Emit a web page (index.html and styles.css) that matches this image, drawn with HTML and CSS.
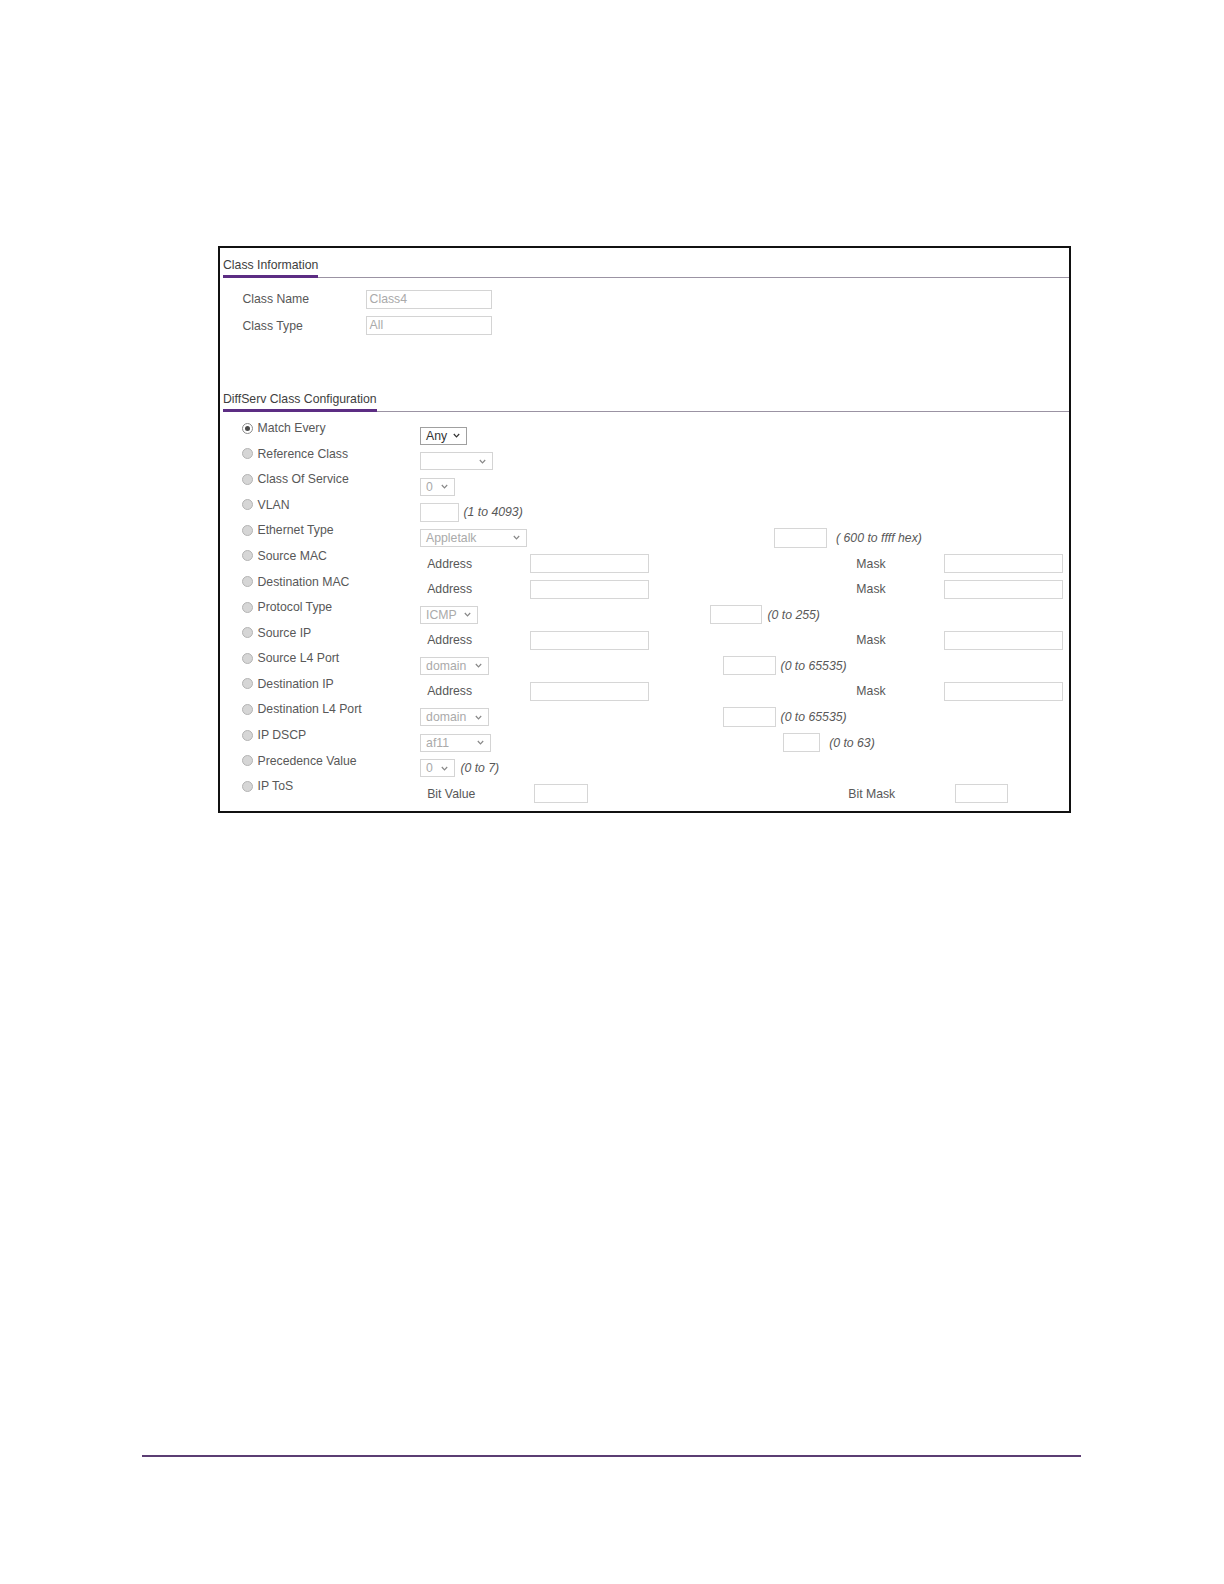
FILE: index.html
```html
<!DOCTYPE html>
<html>
<head>
<meta charset="utf-8">
<title>DiffServ Class Configuration</title>
<link rel="stylesheet" href="styles.css">
</head>
<body>
<div class="page">
  <div class="panel">
    <div class="section-head head-info"><span>Class Information</span></div>
    <div class="info">
      <div class="info-row"><div class="info-label">Class Name</div><div class="tbox">Class4</div></div>
      <div class="info-row"><div class="info-label">Class Type</div><div class="tbox">All</div></div>
    </div>
    <div class="section-head head-diff"><span>DiffServ Class Configuration</span></div>
    <div class="rows">
      <div class="row">
        <div class="opt"><span class="radio on"></span>Match Every</div>
        <div class="ctl"><div class="sel sel-active w46"><span>Any</span><svg viewBox="0 0 7 5"><path d="M0.8 1 L3.5 3.8 L6.2 1"/></svg></div></div>
      </div>
      <div class="row">
        <div class="opt"><span class="radio"></span>Reference Class</div>
        <div class="ctl"><div class="sel w72"><span></span><svg viewBox="0 0 7 5"><path d="M0.8 1 L3.5 3.8 L6.2 1"/></svg></div></div>
      </div>
      <div class="row">
        <div class="opt"><span class="radio"></span>Class Of Service</div>
        <div class="ctl"><div class="sel w35"><span>0</span><svg viewBox="0 0 7 5"><path d="M0.8 1 L3.5 3.8 L6.2 1"/></svg></div></div>
      </div>
      <div class="row">
        <div class="opt"><span class="radio"></span>VLAN</div>
        <div class="ctl"><div class="fld w39"></div><span class="hint g4">(1 to 4093)</span></div>
      </div>
      <div class="row">
        <div class="opt"><span class="radio"></span>Ethernet Type</div>
        <div class="ctl"><div class="sel w106"><span>Appletalk</span><svg viewBox="0 0 7 5"><path d="M0.8 1 L3.5 3.8 L6.2 1"/></svg></div><div class="fld w52 ml245"></div><span class="hint g9">( 600 to ffff hex)</span></div>
      </div>
      <div class="row">
        <div class="opt"><span class="radio"></span>Source MAC</div>
        <div class="ctl"><div class="sub">Address</div><div class="fld w118"></div><div class="mask">Mask</div><div class="fld w118"></div></div>
      </div>
      <div class="row">
        <div class="opt"><span class="radio"></span>Destination MAC</div>
        <div class="ctl"><div class="sub">Address</div><div class="fld w118"></div><div class="mask">Mask</div><div class="fld w118"></div></div>
      </div>
      <div class="row">
        <div class="opt"><span class="radio"></span>Protocol Type</div>
        <div class="ctl"><div class="sel w57"><span>ICMP</span><svg viewBox="0 0 7 5"><path d="M0.8 1 L3.5 3.8 L6.2 1"/></svg></div><div class="fld w52 ml230"></div><span class="hint g5">(0 to 255)</span></div>
      </div>
      <div class="row">
        <div class="opt"><span class="radio"></span>Source IP</div>
        <div class="ctl"><div class="sub">Address</div><div class="fld w118"></div><div class="mask">Mask</div><div class="fld w118"></div></div>
      </div>
      <div class="row">
        <div class="opt"><span class="radio"></span>Source L4 Port</div>
        <div class="ctl"><div class="sel w68"><span>domain</span><svg viewBox="0 0 7 5"><path d="M0.8 1 L3.5 3.8 L6.2 1"/></svg></div><div class="fld w52 ml232"></div><span class="hint g5">(0 to 65535)</span></div>
      </div>
      <div class="row">
        <div class="opt"><span class="radio"></span>Destination IP</div>
        <div class="ctl"><div class="sub">Address</div><div class="fld w118"></div><div class="mask">Mask</div><div class="fld w118"></div></div>
      </div>
      <div class="row">
        <div class="opt"><span class="radio"></span>Destination L4 Port</div>
        <div class="ctl"><div class="sel w68"><span>domain</span><svg viewBox="0 0 7 5"><path d="M0.8 1 L3.5 3.8 L6.2 1"/></svg></div><div class="fld w52 ml232"></div><span class="hint g5">(0 to 65535)</span></div>
      </div>
      <div class="row">
        <div class="opt"><span class="radio"></span>IP DSCP</div>
        <div class="ctl"><div class="sel w70"><span>af11</span><svg viewBox="0 0 7 5"><path d="M0.8 1 L3.5 3.8 L6.2 1"/></svg></div><div class="fld w37 ml289"></div><span class="hint g9">(0 to 63)</span></div>
      </div>
      <div class="row">
        <div class="opt"><span class="radio"></span>Precedence Value</div>
        <div class="ctl"><div class="sel w35"><span>0</span><svg viewBox="0 0 7 5"><path d="M0.8 1 L3.5 3.8 L6.2 1"/></svg></div><span class="hint g5">(0 to 7)</span></div>
      </div>
      <div class="row">
        <div class="opt"><span class="radio"></span>IP ToS</div>
        <div class="ctl"><div class="sub sub-bit">Bit Value</div><div class="fld w53"></div><div class="bitmask">Bit Mask</div><div class="fld w52"></div></div>
      </div>
    </div>
  </div>
  <div class="rule"></div>
</div>
</body>
</html>
```

FILE: styles.css
```css
* {
  box-sizing: border-box;
}

body {
  margin: 0;
  background: #fff;
  font-family: "Liberation Sans", Arial, sans-serif;
  font-size: 12.25px;
  color: #585858;
}

.page {
  padding-top: 246px;
}

.panel {
  margin-left: 218px;
  width: 853px;
  height: 567px;
  border: 2px solid #111;
  padding-left: 3px;
}

.section-head {
  display: flex;
  align-items: flex-end;
  border-bottom: 1px solid #9b93a3;
  line-height: 14px;
  color: #3e3e3e;
}

.section-head span {
  display: block;
  padding-bottom: 3px;
  border-bottom: 3px solid #5c2d83;
  margin-bottom: -1px;
}

.head-info {
  padding-top: 9.5px;
}

.head-diff {
  margin-top: 56.5px;
}

.info {
  margin-top: 12.3px;
  padding-left: 19.4px;
  display: flex;
  flex-direction: column;
  gap: 7.1px;
}

.info-row {
  display: flex;
  align-items: center;
  height: 19.2px;
}

.info-label {
  width: 123.2px;
}

.tbox {
  width: 126.2px;
  height: 19.2px;
  border: 1px solid #d4d4d4;
  color: #aaa;
  padding-left: 3px;
  line-height: 17px;
}

.rows {
  margin-top: 9.3px;
  padding-left: 19.4px;
}

.row {
  display: flex;
  align-items: flex-start;
  height: 25.58px;
}

.opt {
  width: 177.7px;
  flex: none;
  display: flex;
  align-items: center;
  line-height: 14px;
}

.radio {
  width: 11px;
  height: 11px;
  border-radius: 50%;
  border: 1px solid #b4b4b4;
  background: #d6d6d6;
  margin-right: 4.1px;
  flex: none;
}

.radio.on {
  background: #fff;
  border-color: #8a8a8a;
  display: flex;
  align-items: center;
  justify-content: center;
}

.radio.on::after {
  content: "";
  width: 5px;
  height: 5px;
  border-radius: 50%;
  background: #4a4a4a;
}

.ctl {
  display: flex;
  align-items: center;
  height: 19.2px;
  margin-top: 5px;
}

.sel {
  height: 18.2px;
  border: 1px solid #d4d4d4;
  color: #aaa;
  display: flex;
  align-items: center;
  justify-content: space-between;
  padding: 0 6px 0 5px;
  flex: none;
}

.sel svg {
  width: 7px;
  height: 5px;
  fill: none;
  stroke: #888;
  stroke-width: 1.2;
}

.sel-active {
  border-color: #a0a0a0;
  color: #333;
}

.sel-active svg {
  stroke: #333;
}

.fld {
  height: 19.2px;
  border: 1px solid #d6d6d6;
  background: #fff;
  flex: none;
}

.sub {
  width: 110.1px;
  padding-left: 7.1px;
  flex: none;
}

.sub-bit {
  width: 114.1px;
}

.mask {
  width: 87.9px;
  margin-left: 207px;
  flex: none;
}

.bitmask {
  width: 107px;
  margin-left: 260.6px;
  flex: none;
}

.hint {
  font-style: italic;
  color: #585858;
  white-space: nowrap;
}

.g4 { margin-left: 4px; }
.g5 { margin-left: 5px; }
.g9 { margin-left: 9.1px; }

.ml230 { margin-left: 232.3px; }
.ml232 { margin-left: 234.3px; }
.ml245 { margin-left: 247.4px; }
.ml289 { margin-left: 291.9px; }

.w35 { width: 35.3px; }
.w37 { width: 37.4px; }
.w39 { width: 39.4px; }
.w46 { width: 46.5px; }
.w52 { width: 52.5px; }
.w53 { width: 53.5px; }
.w57 { width: 57.6px; }
.w68 { width: 68.7px; }
.w70 { width: 70.7px; }
.w72 { width: 72.7px; }
.w106 { width: 107px; }
.w118 { width: 119.2px; }

.rule {
  margin: 642.3px 0 0 142.4px;
  width: 938.2px;
  height: 2px;
  background: #5b3d73;
}
```
